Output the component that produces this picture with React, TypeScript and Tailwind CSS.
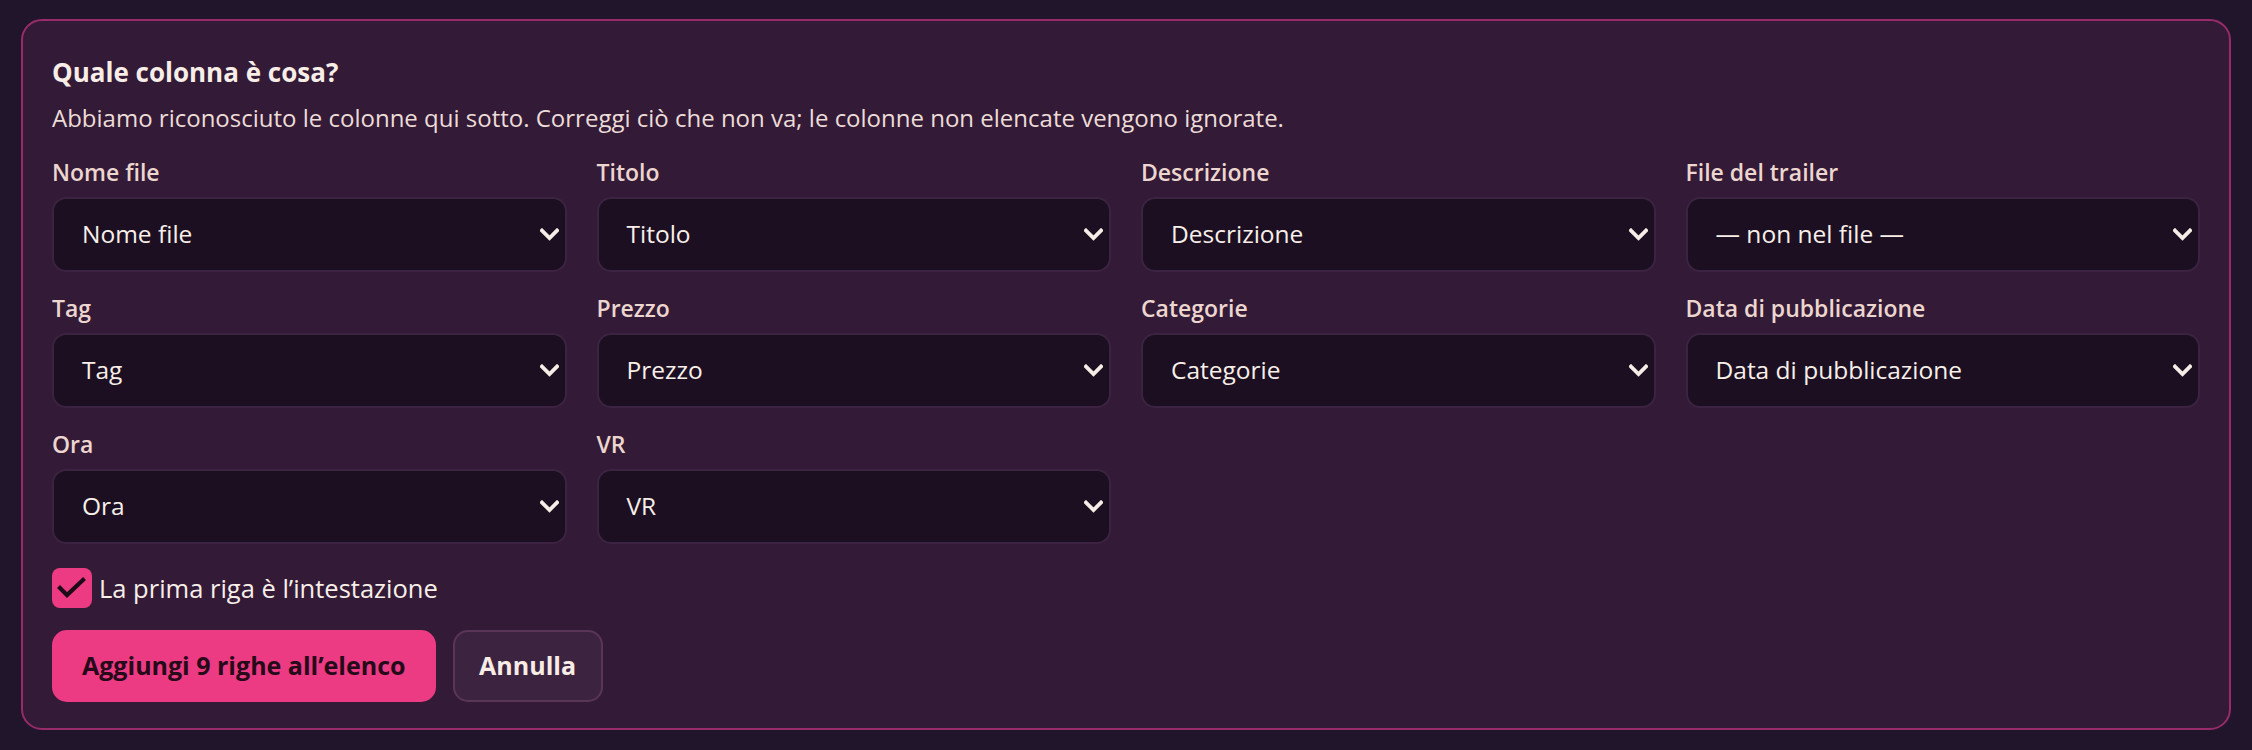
const fields = [
  { label: "Nome file", value: "Nome file" },
  { label: "Titolo", value: "Titolo" },
  { label: "Descrizione", value: "Descrizione" },
  { label: "File del trailer", value: "— non nel file —" },
  { label: "Tag", value: "Tag" },
  { label: "Prezzo", value: "Prezzo" },
  { label: "Categorie", value: "Categorie" },
  { label: "Data di pubblicazione", value: "Data di pubblicazione" },
  { label: "Ora", value: "Ora" },
  { label: "VR", value: "VR" },
];

function Chevron() {
  return (
    <svg width="19" height="13" viewBox="0 0 19 13" className="shrink-0" aria-hidden="true">
      <path d="M2 2.5 L9.5 10 L17 2.5" fill="none" stroke="#f6ede6" strokeWidth="3.8" strokeLinecap="square" />
    </svg>
  );
}

export default function App() {
  return (
    <div className="w-full h-[750px] bg-[#21152b] pt-[19px] px-[21px] font-['Open_Sans','Noto_Sans',sans-serif]">
      <div className="w-[2210px] h-[711px] rounded-[21px] border-2 border-[#982b6c] bg-[#331a36] px-[29px] pt-[33px]">
        {/* Header */}
        <h2 className="text-[26px] leading-[36px] font-bold text-[#f8ede7]">Quale colonna è cosa?</h2>
        <p className="mt-[12px] text-[24px] leading-[32px] text-[#ecdcd8]">
          Abbiamo riconosciuto le colonne qui sotto. Correggi ciò che non va; le colonne non elencate vengono ignorate.
        </p>

        {/* Column mapping */}
        <div className="mt-[23px] grid grid-cols-4 gap-x-[30px] gap-y-[21px]">
          {fields.map((f) => (
            <div key={f.label} className="flex flex-col gap-[10px]">
              <span className="text-[23px] leading-[30px] font-semibold text-[#ecd6cf]">{f.label}</span>
              <div className="h-[75px] rounded-[14px] border-2 border-[#3b2341] bg-[#1c0f21] pl-[28px] pr-[6px] flex items-center justify-between">
                <span className="text-[24.5px] text-[#f8efe9]">{f.value}</span>
                <Chevron />
              </div>
            </div>
          ))}
        </div>

        {/* Header row toggle */}
        <label className="mt-[24px] flex items-center gap-[7px]">
          <span className="w-[40px] h-[40px] rounded-[8px] bg-[#ec3b83] flex items-center justify-center">
            <svg width="40" height="40" viewBox="0 0 40 40" aria-hidden="true">
              <path d="M8 20 L15 27 L31 12" fill="none" stroke="#1d0c17" strokeWidth="4.2" strokeLinecap="square" />
            </svg>
          </span>
          <span className="text-[25.5px] text-[#f8efe9]">La prima riga è l’intestazione</span>
        </label>

        {/* Actions */}
        <div className="mt-[22px] flex gap-[17px]">
          <button className="h-[72px] px-[30px] rounded-[15px] bg-[#ec3b83] text-[25px] font-bold text-[#260a1a]">
            Aggiungi 9 righe all’elenco
          </button>
          <button className="h-[72px] w-[150px] rounded-[15px] border-2 border-[#5a3558] bg-[#3c2441] text-[25px] font-bold text-[#f8ece5] flex items-center justify-center">
            Annulla
          </button>
        </div>
      </div>
    </div>
  );
}
